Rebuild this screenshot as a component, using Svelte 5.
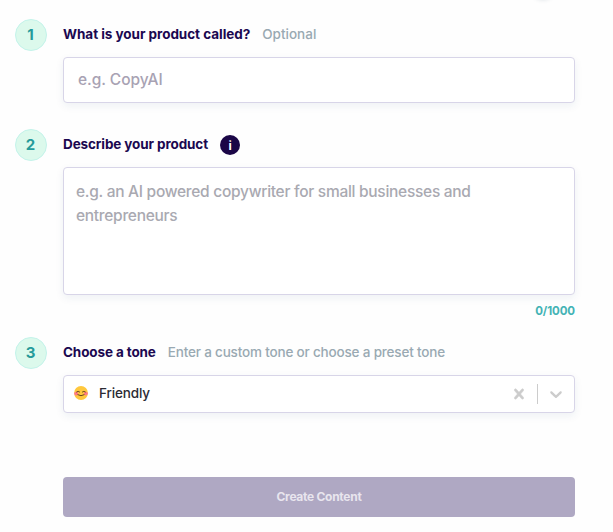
<script lang="ts">
	const maxLength = 1000;

	let name = $state('');
	let description = $state('');
	let tone = $state('Friendly');
</script>

<form class="content-form">
	<div class="edge-shadow"></div>

	<section class="step step-name">
		<span class="step-number">1</span>
		<div class="step-body">
			<div class="step-header">
				<label class="title title-name" for="name">What is your product called?</label>
				<span class="hint hint-optional">Optional</span>
			</div>
			<input id="name" class="field" type="text" placeholder="e.g. CopyAI" bind:value={name} />
		</div>
	</section>

	<section class="step step-description">
		<span class="step-number">2</span>
		<div class="step-body">
			<div class="step-header">
				<label class="title title-description" for="description">Describe your product</label>
				<span class="info">i</span>
			</div>
			<textarea
				id="description"
				class="field"
				placeholder="e.g. an AI powered copywriter for small businesses and entrepreneurs"
				bind:value={description}
			></textarea>
			<span class="counter">{description.length}/{maxLength}</span>
		</div>
	</section>

	<section class="step step-tone">
		<span class="step-number">3</span>
		<div class="step-body">
			<div class="step-header">
				<span class="title title-tone">Choose a tone</span>
				<span class="hint hint-tone">Enter a custom tone or choose a preset tone</span>
			</div>
			<div class="field select">
				<svg class="emoji" width="14" height="14" viewBox="0 0 14 14">
					<circle cx="7" cy="7" r="6.9" fill="#ffc83d" />
					<ellipse cx="2.2" cy="7.6" rx="2" ry="1.9" fill="#ff7a84" />
					<ellipse cx="11.8" cy="7.6" rx="2" ry="1.9" fill="#ff7a84" />
					<path
						d="M2.6 5.9Q4.1 4.6 5.6 5.9M8.4 5.9Q9.9 4.6 11.4 5.9M3.9 8.8Q7 10.8 10.1 8.8"
						fill="none"
						stroke="#6b4420"
						stroke-width="1"
						stroke-linecap="round"
					/>
				</svg>
				<span class="tone">{tone}</span>
				<div class="indicators">
					<svg class="clear" width="20" height="20" viewBox="0 0 20 20">
						<path
							d="M14.348 14.849c-0.469 0.469-1.229 0.469-1.697 0l-2.651-3.030-2.651 3.029c-0.469 0.469-1.229 0.469-1.697 0-0.469-0.469-0.469-1.229 0-1.697l2.758-3.15-2.759-3.152c-0.469-0.469-0.469-1.228 0-1.697s1.228-0.469 1.697 0l2.652 3.031 2.651-3.031c0.469-0.469 1.228-0.469 1.697 0s0.469 1.229 0 1.697l-2.758 3.152 2.758 3.15c0.469 0.469 0.469 1.229 0 1.698z"
						/>
					</svg>
					<span class="separator"></span>
					<svg width="20" height="20" viewBox="0 0 20 20">
						<path
							d="M4.516 7.548c0.436-0.446 1.043-0.481 1.576 0l3.908 3.747 3.908-3.747c0.533-0.481 1.141-0.446 1.574 0 0.436 0.445 0.408 1.197 0 1.615-0.406 0.418-4.695 4.502-4.695 4.502-0.217 0.223-0.502 0.335-0.787 0.335s-0.57-0.112-0.789-0.335c0 0-4.287-4.084-4.695-4.502s-0.436-1.17 0-1.615z"
						/>
					</svg>
				</div>
			</div>
		</div>
	</section>

	<button class="submit" type="button" disabled>Create Content</button>
</form>

<style>
	:global(body) {
		margin: 0;
		background: #fefefe;
	}

	.content-form {
		position: relative;
		box-sizing: border-box;
		display: flex;
		flex-direction: column;
		width: 613px;
		height: 532px;
		padding: 19px 38px 15px 15px;
		overflow: hidden;
		font-family: Inter, 'Liberation Sans', sans-serif;
	}

	.edge-shadow {
		position: absolute;
		top: -12px;
		left: 535px;
		width: 16px;
		height: 10px;
		border-radius: 50%;
		box-shadow: 0 2px 4px rgba(60, 90, 110, 0.18);
	}

	.step {
		display: flex;
		gap: 16px;
	}

	.step-name {
		height: 110px;
	}

	.step-description {
		height: 208px;
	}

	.step-tone {
		height: 140px;
	}

	.step-number {
		box-sizing: border-box;
		display: flex;
		flex: none;
		align-items: center;
		justify-content: center;
		width: 32px;
		height: 32px;
		padding: 0 1px 2px 0;
		border: 1px solid #c3f3ea;
		border-radius: 50%;
		background: #dcf9ec;
		color: #259b9a;
		font-size: 15px;
		font-weight: 700;
	}

	.step-body {
		display: flex;
		flex: 1;
		flex-direction: column;
	}

	.step-header {
		display: flex;
		align-items: center;
		gap: 12px;
		height: 32px;
		margin-bottom: 6px;
		font-size: 13.5px;
		white-space: nowrap;
	}

	.title {
		padding-bottom: 2px;
		color: #1b0850;
		font-weight: 700;
	}

	.title-name {
		letter-spacing: -0.04px;
	}

	.title-description {
		letter-spacing: -0.11px;
	}

	.title-tone {
		letter-spacing: -0.12px;
	}

	.hint {
		padding-bottom: 2px;
		color: #99a9b2;
		font-weight: 500;
	}

	.hint-tone {
		letter-spacing: -0.18px;
	}

	.info {
		display: flex;
		align-items: center;
		justify-content: center;
		width: 20px;
		height: 20px;
		border-radius: 50%;
		background: #1b0647;
		color: #fff;
		font-size: 12px;
		font-weight: 700;
	}

	.field {
		box-sizing: border-box;
		width: 100%;
		border: 1px solid #d8d5e8;
		border-radius: 4px;
		outline: none;
		background: #fff;
		box-shadow: 0 3px 8px rgba(30, 70, 110, 0.07);
		font-family: inherit;
		font-size: 15.5px;
		font-weight: 500;
		letter-spacing: -0.28px;
	}

	.field::placeholder {
		color: #a9a9b1;
		opacity: 1;
	}

	input.field {
		height: 46px;
		padding: 0 14px 2px;
		letter-spacing: -0.05px;
	}

	input.field::placeholder {
		color: #a8a2b3;
	}

	textarea.field {
		display: block;
		height: 128px;
		padding: 12px;
		line-height: 24px;
		resize: none;
	}

	.counter {
		align-self: flex-end;
		margin-top: 9px;
		color: #44b3b5;
		font-size: 11.5px;
		font-weight: 700;
		letter-spacing: -0.1px;
		line-height: 14px;
	}

	.select {
		display: flex;
		align-items: center;
		height: 38px;
		padding: 0 8px 0 10px;
		color: #2b2b33;
		font-size: 13.5px;
		letter-spacing: -0.15px;
	}

	.emoji {
		margin: 0 11px 2px 0;
	}

	.tone {
		padding-bottom: 2px;
	}

	.indicators {
		display: flex;
		align-items: center;
		gap: 8px;
		margin-left: auto;
		fill: #ccc;
	}

	.clear {
		stroke: #ccc;
		stroke-width: 0.5;
	}

	.separator {
		width: 1px;
		height: 20px;
		background: #ccc;
	}

	.submit {
		height: 40px;
		padding-bottom: 2px;
		border: 0;
		border-radius: 4px;
		margin-left: 48px;
		background: #afa8c3;
		color: #e8e5ee;
		font-family: inherit;
		font-size: 12px;
		font-weight: 700;
		letter-spacing: -0.28px;
	}
</style>
